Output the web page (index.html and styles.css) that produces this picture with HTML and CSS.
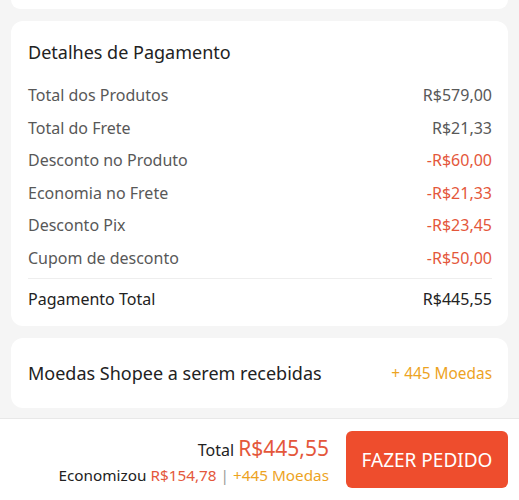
FILE: index.html
```html
<!DOCTYPE html>
<html lang="pt-BR">
<head>
<meta charset="utf-8">
<link rel="stylesheet" href="styles.css">
</head>
<body>
<div class="page">
  <div class="card card-top"></div>
  <div class="card details">
    <h2 class="title">Detalhes de Pagamento</h2>
    <div class="row"><span>Total dos Produtos</span><span>R$579,00</span></div>
    <div class="row"><span>Total do Frete</span><span>R$21,33</span></div>
    <div class="row"><span>Desconto no Produto</span><span class="neg">-R$60,00</span></div>
    <div class="row"><span>Economia no Frete</span><span class="neg">-R$21,33</span></div>
    <div class="row"><span>Desconto Pix</span><span class="neg">-R$23,45</span></div>
    <div class="row"><span>Cupom de desconto</span><span class="neg">-R$50,00</span></div>
    <div class="divider"></div>
    <div class="row total-row"><span>Pagamento Total</span><span>R$445,55</span></div>
  </div>
  <div class="card coins">
    <span class="coins-label">Moedas Shopee a serem recebidas</span>
    <span class="coins-value">+ 445 Moedas</span>
  </div>
</div>
<div class="bottom-bar">
  <div class="summary">
    <div class="sum-total"><span class="sum-label">Total</span> <span class="sum-price">R$445,55</span></div>
    <div class="sum-save">Economizou <span class="save-val">R$154,78</span> <span class="sep">|</span> <span class="save-coins">+445 Moedas</span></div>
  </div>
  <button class="order-btn">FAZER PEDIDO</button>
</div>
</body>
</html>
```
FILE: styles.css
```css
* { box-sizing: border-box; }
html, body {
  margin: 0;
  padding: 0;
  background: #f5f5f5;
  font-family: "Noto Sans", "Open Sans", sans-serif;
  height: 500px;
  overflow: hidden;
}
.page {
  display: flex;
  flex-direction: column;
  gap: 12px;
  padding: 0 11px;
}
.card {
  background: #fff;
  border-radius: 12px;
}
.card-top {
  height: 9px;
  border-radius: 0 0 12px 12px;
}
.details {
  padding: 17px 16px 10px 17px;
  height: 305px;
}
.title {
  margin: 0 0 13px;
  font-size: 18px;
  font-weight: 400;
  line-height: 28px;
  color: #222;
}
.row {
  display: flex;
  justify-content: space-between;
  align-items: center;
  height: 32.5px;
  font-size: 16px;
  color: #585858;
}
.neg { color: #e4573b; }
.divider {
  height: 1px;
  background: #eeeeee;
  margin: 4px 0 4px;
}
.total-row {
  color: #222;
}
.coins {
  height: 70px;
  padding: 0 16px 0 17px;
  display: flex;
  justify-content: space-between;
  align-items: center;
}
.coins-label { font-size: 18px; color: #222; }
.coins-value { font-size: 15.4px; color: #eda31f; }
.bottom-bar {
  position: absolute;
  left: 0;
  right: 0;
  top: 418px;
  height: 82px;
  background: #fff;
  border-top: 1px solid #e8e8e8;
  display: flex;
  justify-content: flex-end;
  align-items: flex-start;
  padding: 12px 11px 0 0;
  gap: 17px;
}
.summary {
  display: flex;
  flex-direction: column;
  align-items: flex-end;
  padding-top: 3px;
}
.sum-total { line-height: 28px; color: #222; }
.sum-label { font-size: 16px; }
.sum-price { font-size: 21px; color: #e4573b; }
.sum-save { font-size: 15.3px; line-height: 22px; color: #222; }
.save-val { color: #e4573b; }
.sep { color: #999; }
.save-coins { color: #eda31f; }
.order-btn {
  width: 162px;
  height: 57px;
  border: none;
  border-radius: 6px;
  background: #ee4d2d;
  color: #fff;
  font-family: inherit;
  font-size: 19px;
  padding: 0;
}
```
